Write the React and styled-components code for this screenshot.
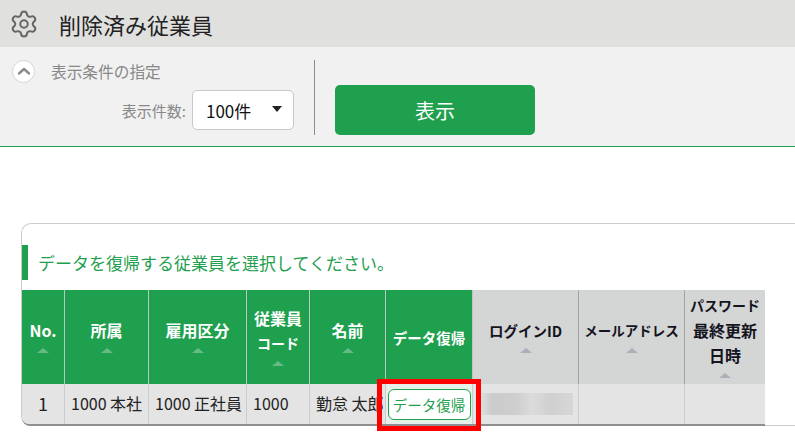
import React from "react";
import styled, { createGlobalStyle } from "styled-components";
import { Settings } from "lucide-react";

const GREEN = "#1fa04e";
const FONT = `"Noto Sans CJK JP", "Noto Sans", sans-serif`;

const GlobalStyle = createGlobalStyle`
  html, body {
    margin: 0;
    padding: 0;
    background: #fff;
    overflow: hidden;
  }
  body {
    font-family: ${FONT};
    color: #222;
  }
`;

const Page = styled.div`
  width: 795px;
  height: 442px;
  overflow: hidden;
`;

const TitleBar = styled.header`
  height: 47px;
  background: #e0e0de;
  display: flex;
  align-items: center;
  padding-left: 9px;
  gap: 20px;
  box-sizing: border-box;
`;

const Title = styled.h1`
  margin: 0;
  font-size: 22px;
  font-weight: 400;
  line-height: 1;
  color: #222;
`;

const FilterBar = styled.section`
  height: 100px;
  box-sizing: border-box;
  background: #f1f1f1;
  border-bottom: 1px solid ${GREEN};
  display: flex;
  padding: 12px 0 0 12px;
`;

const FilterLeft = styled.div`
  width: 282px;
  display: flex;
  flex-direction: column;
`;

const Toggle = styled.div`
  display: flex;
  align-items: center;
  gap: 16px;
  height: 24px;
  color: #888;
  font-size: 15.7px;
`;

const ToggleCircle = styled.span`
  width: 23px;
  height: 23px;
  box-sizing: border-box;
  border-radius: 50%;
  background: #fff;
  border: 1px solid #d4d4d4;
  display: flex;
  align-items: center;
  justify-content: center;
`;

const FieldRow = styled.div`
  display: flex;
  justify-content: flex-end;
  align-items: center;
  gap: 6px;
  margin-top: 7px;
`;

const FieldLabel = styled.span`
  font-size: 15px;
  color: #888;
`;

const SelectBox = styled.div`
  width: 102px;
  height: 40px;
  box-sizing: border-box;
  background: #fff;
  border: 1px solid #c8c8c8;
  border-radius: 5px;
  display: flex;
  align-items: center;
  justify-content: space-between;
  padding: 0 11px 0 13px;
  font-size: 17px;
  color: #111;
`;

const Caret = styled.span`
  width: 0;
  height: 0;
  margin-bottom: 3px;
  border-left: 5px solid transparent;
  border-right: 5px solid transparent;
  border-top: 6px solid #222;
`;

const Divider = styled.div`
  width: 1px;
  height: 75px;
  background: #8c8c8c;
  margin: 1px 20px 0 20px;
`;

const ShowButton = styled.button`
  width: 200px;
  height: 50px;
  margin-top: 26px;
  border: 0;
  border-radius: 5px;
  background: ${GREEN};
  color: #fff;
  font-family: ${FONT};
  font-size: 20px;
`;

const Panel = styled.section`
  position: relative;
  margin: 76px 0 0 21px;
  height: 203px;
  box-sizing: border-box;
  border-top: 1px solid #ccc;
  border-left: 1px solid #ccc;
  border-bottom: 1px solid #ccc;
  border-radius: 10px 0 0 10px;
`;

const PanelHeading = styled.h2`
  margin: 21px 0 10px;
  height: 35px;
  box-sizing: border-box;
  border-left: 6px solid ${GREEN};
  padding-left: 10px;
  font-size: 17px;
  font-weight: 400;
  line-height: 35px;
  color: ${GREEN};
  white-space: nowrap;
`;

const Table = styled.table`
  table-layout: fixed;
  width: 743px;
  border-collapse: separate;
  border-spacing: 0;
  border-bottom: 2px solid #8f8f8f;
  border-bottom-left-radius: 8px;
  overflow: hidden;
`;

const Head = styled.th`
  height: 94px;
  box-sizing: border-box;
  padding: 0;
  background: ${(p) => (p.$muted ? "#d4d5d5" : GREEN)};
  color: ${(p) => (p.$muted ? "#14141e" : "#fff")};
  border-right: 1px solid ${(p) => (p.$muted ? "#a4a4a4" : "#b9c9bd")};
  font-weight: 700;
  text-align: center;
  vertical-align: middle;
  &:last-child {
    border-right: 0;
  }
`;

const HeadLine = styled.div`
  font-size: ${(p) => p.$size || 16}px;
  line-height: 25px;
  white-space: nowrap;
`;

const SortMark = styled.span`
  display: block;
  width: 0;
  height: 0;
  margin: 5px auto 3px;
  border-left: 6px solid transparent;
  border-right: 6px solid transparent;
  border-bottom: 5px solid ${(p) => (p.$muted ? "#aeaeb8" : "#66bb85")};
`;

const Cell = styled.td`
  height: 40px;
  box-sizing: border-box;
  padding: 0 0 2px ${(p) => (p.$center ? 0 : "6px")};
  background: ${(p) => (p.$tint ? "#e6f2e9" : "#e4e4e4")};
  border-right: 1px solid #cbcbcb;
  font-size: ${(p) => (p.$big ? "18px" : "16px")};
  text-align: ${(p) => (p.$center ? "center" : "left")};
  white-space: nowrap;
  overflow: hidden;
  color: #222;
  &:last-child {
    border-right: 0;
  }
`;

const RestoreButton = styled.button`
  width: 83px;
  height: 31px;
  padding: 0;
  box-sizing: border-box;
  border: 1px solid ${GREEN};
  border-radius: 6px;
  background: #fff;
  color: ${GREEN};
  font-family: ${FONT};
  font-size: 14.5px;
  display: block;
  margin: 2px auto 0;
`;

const BlurredId = styled.div`
  width: 92px;
  height: 22px;
  margin: 2px 0 0 2px;
  background: linear-gradient(90deg, #dfdfdf 0, #cbcbcb 12%, #cfcfcf 40%, #dcdcdc 55%, #d0d0d0 75%, #d6d6d6 100%);
`;

const Highlight = styled.div`
  position: absolute;
  left: 355px;
  top: 155px;
  width: 104px;
  height: 52px;
  box-sizing: border-box;
  border: 5px solid #fe0000;
  pointer-events: none;
`;

const columns = [
  { width: 43, label: [["No."]] },
  { width: 84, label: [["所属"]] },
  { width: 98, label: [["雇用区分"]] },
  { width: 63, label: [["従業員"], ["コード", 14]] },
  { width: 76, label: [["名前"]] },
  { width: 87, label: [["データ復帰", 14.5]], noSort: true },
  { width: 106, label: [["ログインID", 14.5]], muted: true },
  { width: 106, label: [["メールアドレス", 13.5]], muted: true },
  { width: 80, label: [["パスワード", 14], ["最終更新"], ["日時"]], muted: true },
];

export default function App() {
  return (
    <Page>
      <GlobalStyle />
      <TitleBar>
        <Settings size={30} strokeWidth={1.6} color="#666" />
        <Title>削除済み従業員</Title>
      </TitleBar>
      <FilterBar>
        <FilterLeft>
          <Toggle>
            <ToggleCircle>
              <svg width="14" height="10" viewBox="0 0 14 10">
                <path d="M2 7.5 L7 3 L12 7.5" fill="none" stroke="#8a8a8a" strokeWidth="2.4" strokeLinecap="round" strokeLinejoin="round" />
              </svg>
            </ToggleCircle>
            表示条件の指定
          </Toggle>
          <FieldRow>
            <FieldLabel>表示件数:</FieldLabel>
            <SelectBox>
              100件
              <Caret />
            </SelectBox>
          </FieldRow>
        </FilterLeft>
        <Divider />
        <ShowButton>表示</ShowButton>
      </FilterBar>
      <Panel>
        <PanelHeading>データを復帰する従業員を選択してください。</PanelHeading>
        <Table>
          <colgroup>
            {columns.map((c, i) => (
              <col key={i} style={{ width: c.width }} />
            ))}
          </colgroup>
          <thead>
            <tr>
              {columns.map((c, i) => (
                <Head key={i} $muted={c.muted}>
                  {c.label.map(([text, size]) => (
                    <HeadLine key={text} $size={size}>{text}</HeadLine>
                  ))}
                  {!c.noSort && <SortMark $muted={c.muted} />}
                </Head>
              ))}
            </tr>
          </thead>
          <tbody>
            <tr>
              <Cell $center $big>1</Cell>
              <Cell>1000 本社</Cell>
              <Cell>1000 正社員</Cell>
              <Cell>1000</Cell>
              <Cell>勤怠 太郎</Cell>
              <Cell $center $tint>
                <RestoreButton>データ復帰</RestoreButton>
              </Cell>
              <Cell>
                <BlurredId />
              </Cell>
              <Cell />
              <Cell />
            </tr>
          </tbody>
        </Table>
        <Highlight />
      </Panel>
    </Page>
  );
}
